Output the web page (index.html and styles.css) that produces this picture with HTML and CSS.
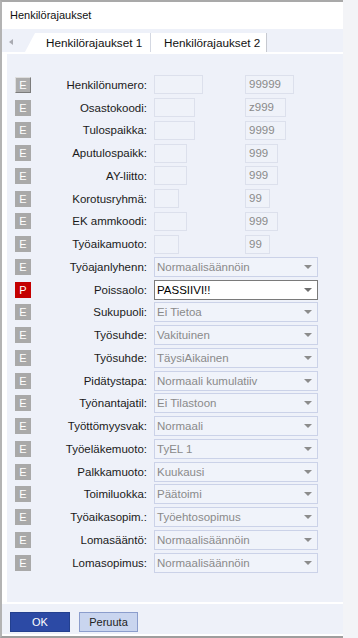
FILE: index.html
```html
<!DOCTYPE html>
<html lang="fi">
<head>
<meta charset="utf-8">
<title>Henkilörajaukset</title>
<link rel="stylesheet" href="styles.css">
</head>
<body>
<div class="window">
  <div class="titlebar">Henkilörajaukset</div>
  <div class="tabstrip">
    <span class="tab-arrow"></span>
    <div class="tab tab-first">Henkilörajaukset 1</div>
    <div class="tab tab-second">Henkilörajaukset 2</div>
  </div>
  <div class="content">
    <div class="row"><span class="flag flag-raised">E</span><span class="lbl">Henkilönumero:</span><span class="cell1"><span class="field w49"></span></span><span class="field w49">99999</span></div>
    <div class="row"><span class="flag">E</span><span class="lbl">Osastokoodi:</span><span class="cell1"><span class="field w41"></span></span><span class="field w41">z999</span></div>
    <div class="row"><span class="flag">E</span><span class="lbl">Tulospaikka:</span><span class="cell1"><span class="field w41"></span></span><span class="field w41">9999</span></div>
    <div class="row"><span class="flag">E</span><span class="lbl">Aputulospaikk:</span><span class="cell1"><span class="field w33"></span></span><span class="field w33">999</span></div>
    <div class="row"><span class="flag">E</span><span class="lbl">AY-liitto:</span><span class="cell1"><span class="field w33"></span></span><span class="field w33">999</span></div>
    <div class="row"><span class="flag">E</span><span class="lbl">Korotusryhmä:</span><span class="cell1"><span class="field w25"></span></span><span class="field w25">99</span></div>
    <div class="row"><span class="flag">E</span><span class="lbl">EK ammkoodi:</span><span class="cell1"><span class="field w33"></span></span><span class="field w33">999</span></div>
    <div class="row"><span class="flag">E</span><span class="lbl">Työaikamuoto:</span><span class="cell1"><span class="field w25"></span></span><span class="field w25">99</span></div>
    <div class="row"><span class="flag">E</span><span class="lbl">Työajanlyhenn:</span><span class="select">Normaalisäännöin</span></div>
    <div class="row"><span class="flag flag-p">P</span><span class="lbl">Poissaolo:</span><span class="select select-active">PASSIIVI!!</span></div>
    <div class="row"><span class="flag">E</span><span class="lbl">Sukupuoli:</span><span class="select">Ei Tietoa</span></div>
    <div class="row"><span class="flag">E</span><span class="lbl">Työsuhde:</span><span class="select">Vakituinen</span></div>
    <div class="row"><span class="flag">E</span><span class="lbl">Työsuhde:</span><span class="select">TäysiAikainen</span></div>
    <div class="row"><span class="flag">E</span><span class="lbl">Pidätystapa:</span><span class="select">Normaali kumulatiiv</span></div>
    <div class="row"><span class="flag">E</span><span class="lbl">Työnantajatil:</span><span class="select">Ei Tilastoon</span></div>
    <div class="row"><span class="flag">E</span><span class="lbl">Työttömyysvak:</span><span class="select">Normaali</span></div>
    <div class="row"><span class="flag">E</span><span class="lbl">Työeläkemuoto:</span><span class="select">TyEL 1</span></div>
    <div class="row"><span class="flag">E</span><span class="lbl">Palkkamuoto:</span><span class="select">Kuukausi</span></div>
    <div class="row"><span class="flag">E</span><span class="lbl">Toimiluokka:</span><span class="select">Päätoimi</span></div>
    <div class="row"><span class="flag">E</span><span class="lbl">Työaikasopim.:</span><span class="select">Työehtosopimus</span></div>
    <div class="row"><span class="flag">E</span><span class="lbl">Lomasääntö:</span><span class="select">Normaalisäännöin</span></div>
    <div class="row"><span class="flag">E</span><span class="lbl">Lomasopimus:</span><span class="select">Normaalisäännöin</span></div>
  </div>
  <div class="buttonbar">
    <button class="btn btn-ok">OK</button>
    <button class="btn btn-cancel">Peruuta</button>
  </div>
</div>
</body>
</html>
```

FILE: styles.css
```css
* { box-sizing: border-box; }
html, body { margin: 0; padding: 0; }
body {
  background: #f3f4f7;
  font-family: "Liberation Sans", Arial, sans-serif;
  color: #1a1a1a;
}
.window {
  width: 343px;
  height: 638px;
  background: #fff;
  border-left: 2px solid #b3b3b3;
  border-top: 2px solid #a9a9a9;
  border-bottom: 2px solid #9e9e9e;
  display: flex;
  flex-direction: column;
}
.titlebar {
  height: 27px;
  line-height: 27px;
  padding-left: 8px;
  font-size: 11px;
  color: #111;
}
.tabstrip {
  height: 23px;
  background: #eef1f9;
  display: flex;
  align-items: flex-end;
  padding-left: 7px;
}
.tab-arrow {
  width: 0;
  height: 0;
  border-top: 3px solid transparent;
  border-bottom: 3px solid transparent;
  border-right: 4px solid #a9abb2;
  margin-bottom: 7px;
  margin-right: 12px;
}
.tab {
  height: 19px;
  line-height: 19px;
  font-size: 11.7px;
  color: #111;
  background: #fff;
  white-space: nowrap;
}
.tab-first {
  width: 126px;
  padding-left: 21px;
  border-right: 1px solid #d4d8e2;
  clip-path: polygon(10px 0, 100% 0, 100% 100%, 0 100%);
}
.tab-second {
  width: 116px;
  padding-left: 13px;
  border-right: 1px solid #c6c9d0;
}
.content {
  height: 552px;
  background: #eef1f9;
  border-left: 5px solid #fff;
  border-top: 2px solid #fff;
  border-bottom: 2px solid #fff;
  padding: 19.6px 0 0 8px;
}
.row {
  height: 22.76px;
  display: flex;
  align-items: center;
}
.flag {
  width: 16px;
  height: 16px;
  flex: none;
  background: #a9a9a9;
  color: #fff;
  font-size: 11px;
  line-height: 16px;
  text-align: center;
}
.flag-raised {
  background: #adadad;
  border-top: 1px solid #dedede;
  border-left: 1px solid #dedede;
  border-right: 1px solid #7c7c7c;
  border-bottom: 1px solid #7c7c7c;
  line-height: 14px;
}
.flag-p { background: #c40000; }
.lbl {
  width: 116px;
  flex: none;
  text-align: right;
  font-size: 11.5px;
  color: #1a1a1a;
  white-space: nowrap;
  margin-right: 7px;
}
.cell1 {
  width: 91px;
  flex: none;
  display: flex;
}
.field {
  height: 19px;
  border: 1px solid #dce0ec;
  background: #eff2f9;
  color: #8a8a8a;
  font-size: 11.5px;
  line-height: 17px;
  padding: 0 3px;
  flex: none;
}
.w49 { width: 49px; }
.w41 { width: 41px; }
.w33 { width: 33px; }
.w25 { width: 25px; }
.select {
  position: relative;
  width: 164px;
  height: 20px;
  border: 1px solid #cbd2e8;
  background: #f0f3fa;
  color: #8a8a8a;
  font-size: 11.5px;
  line-height: 18px;
  padding-left: 2px;
  flex: none;
}
.select::after {
  content: "";
  position: absolute;
  right: 5px;
  top: 7px;
  width: 0;
  height: 0;
  border-left: 4px solid transparent;
  border-right: 4px solid transparent;
  border-top: 4px solid #8c8c8c;
}
.select-active {
  background: #fff;
  border-color: #7a7a7a;
  color: #000;
}
.select-active::after { border-top-color: #6f6f6f; }
.buttonbar {
  height: 30px;
  background: #eef1f9;
  display: flex;
  gap: 9px;
  padding: 8px 0 0 8px;
}
.btn {
  height: 20px;
  font-family: "Liberation Sans", Arial, sans-serif;
  font-size: 11px;
  padding: 0;
  margin: 0;
}
.btn-ok {
  width: 60px;
  background: #2c4aa5;
  border: 1px solid #23408f;
  color: #fff;
}
.btn-cancel {
  width: 59px;
  background: #c9d5ef;
  border: 1px solid #8b9dcc;
  color: #222;
}
```
